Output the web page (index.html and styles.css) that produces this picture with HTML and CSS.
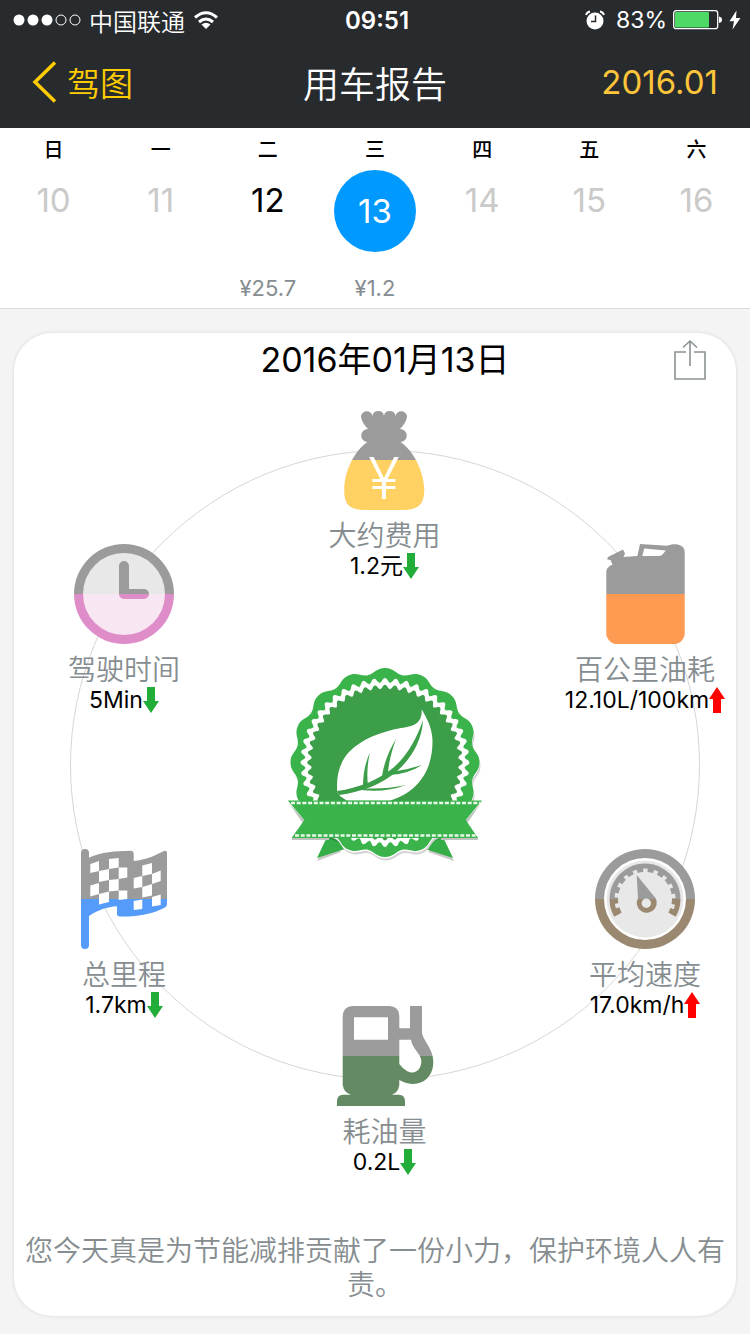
FILE: index.html
```html
<!DOCTYPE html>
<html lang="zh-CN">
<head>
<meta charset="utf-8">
<meta name="viewport" content="width=device-width">
<title>用车报告</title>
<link rel="stylesheet" href="styles.css">
</head>
<body>
<header class="top">
  <div class="status">
    <div class="status-left">
      <svg class="signal" viewBox="0 0 68 12" width="68" height="12" fill="#fff"><circle cx="6" cy="6" r="5.5"/><circle cx="20" cy="6" r="5.5"/><circle cx="34" cy="6" r="5.5"/><g fill="none" stroke="#fff"><circle cx="48" cy="6" r="5"/><circle cx="62" cy="6" r="5"/></g></svg>
      <span>中国联通</span>
      <svg viewBox="0 0 26 20" width="26" height="20" fill="none" stroke="#fff" stroke-width="3"><path d="M2 7.5Q13-2 24 7.5"/><path d="M6 12Q13 6 20 12"/><path d="M8.500 14.500Q13 11 17.500 14.500L13 19Z" fill="#fff" stroke="none"/></svg>
    </div>
    <time class="clock">09:51</time>
    <div class="status-right">
      <svg viewBox="0 0 20 20" width="20" height="20"><circle cx="10" cy="11" r="8.500" fill="#fff"/><path d="M1 5Q2 2 5 1.500M15 1.500Q18 2 19 5" stroke="#fff" stroke-width="1.800" fill="none"/><path d="M10.500 5.500V11.500H6" fill="none" stroke="#272b2e" stroke-width="1.500"/></svg>
      <span class="percent">83%</span>
      <svg viewBox="0 0 50 20" width="50" height="20"><rect x=".7" y=".7" width="44" height="18" rx="2.500" fill="none" stroke="#fff" stroke-width="1.300"/><rect x="2" y="2" width="34" height="15.500" rx="1" fill="#4cd964"/><path d="M46 6.500Q49 7 49 9.700T46 13Z" fill="#fff"/></svg>
      <svg viewBox="0 0 12 20" width="12" height="20" fill="#fff"><path d="M7.500.5L.5 11.300H5L3.500 19.500 11.500 8H7Z"/></svg>
    </div>
  </div>
  <nav class="nav">
    <a class="back" href="#"><svg viewBox="0 0 25 42" width="25" height="42" fill="none" stroke="#fc0" stroke-width="3.500"><path d="M23 1.500L3 21 23 40.500"/></svg>驾图</a>
    <h1 class="nav-title">用车报告</h1>
    <button class="month" type="button">2016.01</button>
  </nav>
</header>

<section class="week">
  <div class="day"><span class="weekday">日</span><button class="date" type="button">10</button></div>
  <div class="day"><span class="weekday">一</span><button class="date" type="button">11</button></div>
  <div class="day"><span class="weekday">二</span><button class="date has-data" type="button">12</button><span class="cost">¥25.7</span></div>
  <div class="day"><span class="weekday">三</span><button class="date selected" type="button">13</button><span class="cost">¥1.2</span></div>
  <div class="day"><span class="weekday">四</span><button class="date" type="button">14</button></div>
  <div class="day"><span class="weekday">五</span><button class="date" type="button">15</button></div>
  <div class="day"><span class="weekday">六</span><button class="date" type="button">16</button></div>
</section>

<svg class="defs" width="0" height="0">
  <defs>
    <linearGradient id="gold" gradientUnits="userSpaceOnUse" x1="0" y1="0" x2="0" y2="100"><stop offset=".5" stop-color="#9b9b9b"/><stop offset=".5" stop-color="#ffd062"/></linearGradient>
    <linearGradient id="pink" gradientUnits="userSpaceOnUse" x1="0" y1="0" x2="0" y2="100"><stop offset=".5" stop-color="#9b9b9b"/><stop offset=".5" stop-color="#df8dc9"/></linearGradient>
    <linearGradient id="face" gradientUnits="userSpaceOnUse" x1="0" y1="0" x2="0" y2="100"><stop offset=".5" stop-color="#e8e8e8"/><stop offset=".5" stop-color="#f8e6f2"/></linearGradient>
    <linearGradient id="orange" gradientUnits="userSpaceOnUse" x1="0" y1="0" x2="0" y2="100"><stop offset=".5" stop-color="#9b9b9b"/><stop offset=".5" stop-color="#ff9a52"/></linearGradient>
    <linearGradient id="blue" gradientUnits="userSpaceOnUse" x1="0" y1="0" x2="0" y2="100"><stop offset=".5" stop-color="#9b9b9b"/><stop offset=".5" stop-color="#549bfa"/></linearGradient>
    <linearGradient id="brown" gradientUnits="userSpaceOnUse" x1="0" y1="0" x2="0" y2="100"><stop offset=".5" stop-color="#9b9b9b"/><stop offset=".5" stop-color="#9b8871"/></linearGradient>
    <linearGradient id="green" gradientUnits="userSpaceOnUse" x1="0" y1="0" x2="0" y2="100"><stop offset=".5" stop-color="#9b9b9b"/><stop offset=".5" stop-color="#638a63"/></linearGradient>
    <symbol id="down" viewBox="0 0 16 26"><path d="M4 0H12V14H16L8 26 0 14H4Z" fill="#22ac38"/></symbol>
    <symbol id="up" viewBox="0 0 16 26"><path d="M4 26H12V12H16L8 0 0 12H4Z" fill="#f00"/></symbol>
  </defs>
</svg>

<main class="report">
  <article class="card">
    <header class="card-head">
      <h2 class="card-title">2016年01月13日</h2>
      <button class="share" type="button" aria-label="分享"><svg viewBox="0 0 34 42" width="34" height="42" fill="none" stroke="#8a9194" stroke-width="1.600"><path d="M13 13H2V40H32V13H21M17 27V2M10 8.500L17 2 24 8.500"/></svg></button>
    </header>

    <div class="ring">
      <div class="side">
        <div class="metric">
          <svg class="icon" viewBox="0 0 100 100"><circle cx="50" cy="50" r="50" fill="url(#pink)"/><circle cx="50" cy="50" r="41" fill="url(#face)"/><path d="M50 22V50H70" fill="none" stroke="url(#pink)" stroke-width="10" stroke-linecap="round" stroke-linejoin="round"/></svg>
          <span class="label">驾驶时间</span>
          <span class="value">5Min<svg class="arrow"><use href="#down"/></svg></span>
        </div>
        <div class="metric">
          <svg class="icon" viewBox="0 0 100 100"><path fill="url(#blue)" d="M7 4a4 4 0 0 1 8 0V8.700C27 3 42 2 56.500 1.700Q59.500 2 59.700 4.500V12C72 11 82 6 90 2Q93 1 93 4V55Q93 57 91 58.500C79 65 63 68 46 67.500Q43 67 43 65V57.300C33 58 24 61 15 67V96a4 4 0 0 1-8 0Z"/><path fill="#fff" d="M16.300 15L25 12V22L16.300 24ZM16.300 36.500L25 34V45L16.300 47.500ZM25 22L35 20V31L25 33ZM25 45L35 42.500V53L25 55.500ZM35 10L44.700 9V18.500L35 20ZM35 31L44.700 30V41.500L35 42.500ZM44.700 18.500H53.300V28.500L44.700 30ZM44.700 41.500H53.300V50L44.700 51ZM59.700 29L68.300 27V38L59.700 39.500ZM59.700 52L68.300 50.500V60L59.700 61ZM68.300 16.500L78 14V25L68.300 27ZM68.300 38L78 35V46.500L68.300 48.500ZM78 25L86.700 21.500V32L78 35ZM78 48L86.700 45.500V56L78 57.500Z"/></svg>
          <span class="label">总里程</span>
          <span class="value">1.7km<svg class="arrow"><use href="#down"/></svg></span>
        </div>
      </div>

      <div class="middle">
        <div class="metric">
          <svg class="icon" viewBox="0 0 100 100"><path fill="url(#gold)" d="M27 7A5.800 5.800 0 0 1 38.500 6A5.800 5.800 0 0 1 50 6A5.800 5.800 0 0 1 61.500 6A5.800 5.800 0 0 1 73 7Q72 13 66 19A6.500 6.500 0 1 1 66.500 32C80 41 90 62 90.300 80C90 94 85 100 68 100H32C15 100 10 94 10.300 80C10 62 20 41 33.500 32A6.500 6.500 0 1 1 34 19Q28 13 27 7Z"/><text class="yen" x="50" y="89" text-anchor="middle">¥</text></svg>
          <span class="label">大约费用</span>
          <span class="value">1.2元<svg class="arrow"><use href="#down"/></svg></span>
        </div>

        <svg class="badge" viewBox="13 13 194 194">
          <defs>
            <path id="lobe" d="M0 0L-17.400-87.300C-10.400-88.700-9-94.500 0-94.500S10.400-88.700 17.400-87.300Z"/>
            <g id="lobes"><use href="#lobe"/><use href="#lobe" transform="rotate(22.500)"/><use href="#lobe" transform="rotate(45)"/><use href="#lobe" transform="rotate(67.500)"/></g>
            <g id="seal"><circle r="87"/><use href="#lobes"/><use href="#lobes" transform="rotate(90)"/><use href="#lobes" transform="rotate(180)"/><use href="#lobes" transform="rotate(270)"/></g>
            <path id="tooth" d="M0 0L-5.230-79.800C-3-80-2.500-84.500 0-84.500S3-80 5.230-79.800Z"/>
            <g id="teeth2"><use href="#tooth"/><use href="#tooth" transform="rotate(7.500)"/></g>
            <g id="teeth4"><use href="#teeth2"/><use href="#teeth2" transform="rotate(15)"/></g>
            <g id="teeth12"><use href="#teeth4"/><use href="#teeth4" transform="rotate(30)"/><use href="#teeth4" transform="rotate(60)"/></g>
            <g id="teeth"><circle r="79"/><use href="#teeth12"/><use href="#teeth12" transform="rotate(90)"/><use href="#teeth12" transform="rotate(180)"/><use href="#teeth12" transform="rotate(270)"/></g>
          </defs>
          <path d="M54 183L42 206 66 197ZM166 183L179 206 153 197Z" fill="#c9c9c9"/>
          <path d="M52 182L42 203 70 194V182ZM168 182L178 203 150 194V182Z" fill="#35ae48"/>
          <path d="M50 182H72V190ZM170 182H148V190Z" fill="#21863a"/>
          <use href="#seal" fill="#d3d3d3" transform="translate(111 111)"/>
          <use href="#seal" fill="#fff" transform="translate(110 109)"/>
          <g transform="translate(110 107.500)"><use href="#seal" fill="#39b34a"/><use href="#teeth" fill="#fff"/><use href="#teeth" fill="#3c9e48" transform="scale(.92)"/></g>
          <path fill="#fff" d="M146.700 54.300C151 62 157 72 157.500 85C158 112 146 136 115 145.700H72L65 141 62.300 137C61 122 64 108 74 97C88 83 106 77 126 73C140 71 147 68 146.700 54.300Z"/>
          <path fill="#3c9e48" d="M62 136C84 133 103 125 118 113C132 101 142 83 148 65C147 87 135 105 121 117C107 129 87 137 64 140Z"/>
          <path fill="#3c9e48" d="M88 132Q88 112 95 97.500Q91 114 93 131ZM107 121Q110 102 121 84Q114 103 113 118ZM116 117Q132 115 147 110Q133 119 115 120ZM86 133Q108 135 131 130Q110 138 86 135Z"/>
          <path d="M17 183L17 185H54V183ZM166 183V185H203V183ZM14 148L31 167 29 170ZM206 148L189 167 191 170Z" fill="#bfc4c0"/>
          <path d="M12.700 145.500H207L190.700 165 203 183H16.700L29.300 165Z" fill="#39b34a"/>
          <path d="M16 148H205M20 180.500H201" stroke="#e9f8eb" stroke-width="2.300" stroke-dasharray="4 1.700"/>
        </svg>

        <div class="metric fuel">
          <svg class="icon" viewBox="0 0 100 100"><path fill="url(#green)" fill-rule="evenodd" d="M17 0H55Q64.300 1 64.300 10V22.300H75V0H87V27.300C89 36 98.300 43 98.300 56C98.300 74 82 84 64.300 74V79Q63 87 57 88.700H64Q70 89 70 95V100H2V95Q2 89 8 88.700H16Q9 87 7.700 79V10Q8 1 17 0ZM19 11.300V33.700H53V11.300ZM64.300 33.700V58C76 73 87 66 86.300 54C85 47 77 42 76 33.700Z"/></svg>
          <span class="label">耗油量</span>
          <span class="value">0.2L<svg class="arrow"><use href="#down"/></svg></span>
        </div>
      </div>

      <div class="side">
        <div class="metric">
          <svg class="icon" viewBox="0 0 100 100"><path fill="url(#orange)" fill-rule="evenodd" d="M11.300 27Q12 23 17.500 20.500L15.500 16 12.500 15.500Q12 13.500 13 13L28 5.500 30 9.500 28.500 13 42.300 12 45 0 72 1.700C78-1 89.700-1 89.700 8V91Q88 98 81 100H20Q13 98 11.300 91ZM49.300 4.500L47.300 12H64Q67 12 70.700 6.500Z"/></svg>
          <span class="label">百公里油耗</span>
          <span class="value">12.10L/100km<svg class="arrow"><use href="#up"/></svg></span>
        </div>
        <div class="metric">
          <svg class="icon" viewBox="0 0 100 100"><circle cx="50" cy="50" r="50" fill="url(#brown)"/><circle cx="50" cy="50" r="41" fill="#fff"/><circle cx="50" cy="50" r="38.500" fill="#e8e8e8"/><g fill="none" stroke="url(#brown)"><path d="M21.400 66.500A33 33 0 1 1 78.600 66.500" stroke-width="5"/><path d="M24.500 64.700A29.500 29.500 0 1 1 75.500 64.700" stroke-width="5" stroke-dasharray="6.300 4.400"/></g><path fill="url(#brown)" fill-rule="evenodd" d="M41.700 26L58 46A10 10 0 1 1 43 49ZM51.300 49.600A4.700 4.700 0 1 0 51.300 59A4.700 4.700 0 0 0 51.300 49.600Z"/></svg>
          <span class="label">平均速度</span>
          <span class="value">17.0km/h<svg class="arrow"><use href="#up"/></svg></span>
        </div>
      </div>
    </div>

    <p class="comment">您今天真是为节能减排贡献了一份小力，保护环境人人有责。</p>
  </article>
</main>
</body>
</html>
```

FILE: styles.css
```css
* { box-sizing: border-box; }
body {
  margin: 0;
  min-height: 100vh;
  background: #f4f4f4;
  color: #000;
  font-family: Inter, "Noto Sans CJK SC", sans-serif;
  font-weight: 400;
}
button {
  padding: 0;
  border: 0;
  background: none;
  color: inherit;
  font: inherit;
  cursor: pointer;
}
svg { display: block; flex: none; }
h1, h2, p { margin: 0; }
.defs { position: absolute; }

.top { background: #272b2e; color: #fff; }
.status {
  display: grid;
  grid-template-columns: 1fr auto 1fr;
  align-items: center;
  height: 40px;
  padding: 0 9px 0 13px;
  font-size: 24px;
  font-weight: 350;
}
.status-left, .status-right { display: flex; align-items: center; gap: 8px; }
.status-right { justify-content: flex-end; gap: 6px; }
.clock { font-size: 24px; font-weight: 600; }
.percent { margin-left: 5px; font-size: 23px; font-weight: 400; }

.nav {
  display: grid;
  grid-template-columns: 1fr auto 1fr;
  align-items: center;
  height: 88px;
  padding: 0 32px 4px;
}
.back {
  display: flex;
  align-items: center;
  gap: 10px;
  color: #fc0;
  font-size: 33px;
  font-weight: 350;
  text-decoration: none;
}
.nav-title { font-size: 36px; font-weight: 350; }
.month { justify-self: end; color: #ffc53a; font-size: 33px; }

.week {
  display: grid;
  grid-template-columns: repeat(7, 1fr);
  height: 181px;
  border-bottom: 1px solid #dcdcdc;
  background: #fff;
}
.day { display: flex; flex-direction: column; align-items: center; }
.weekday { margin: 7px 0 5px; font-size: 20px; line-height: 30px; font-weight: 500; }
.date {
  height: 82px;
  padding-bottom: 22px;
  color: #cacaca;
  font-size: 33px;
  line-height: 60px;
}
.date.has-data { color: #000; }
.date.selected {
  width: 82px;
  padding: 0;
  border-radius: 50%;
  background: #09f;
  color: #fff;
  line-height: 82px;
}
.cost { margin-top: 21px; color: #868d90; font-size: 22px; line-height: 30px; }

.report { padding: 24px 14px 17px; }
.card {
  border-radius: 38px;
  background: #fff;
  box-shadow: 0 0 3px 1px #e2e2e2;
}
.card-head {
  display: grid;
  grid-template-columns: 1fr auto 1fr;
  align-items: center;
  height: 77px;
  padding: 0 29px 24px 49px;
}
.card-title { grid-column: 2; font-size: 34px; line-height: 48px; font-weight: 400; }
.share { justify-self: end; }

.ring {
  position: relative;
  display: flex;
  justify-content: space-between;
  padding: 0 1px 0 20px;
}
.ring::before {
  content: "";
  position: absolute;
  top: 40px;
  left: 56px;
  right: 36px;
  aspect-ratio: 1;
  border: 1px solid #d6d6d6;
  border-radius: 50%;
}
.side, .middle {
  position: relative;
  display: flex;
  flex-direction: column;
  align-items: center;
  width: 180px;
}
.side { gap: 135px; padding-top: 134px; }
.metric {
  display: flex;
  flex-direction: column;
  align-items: center;
  white-space: nowrap;
}
.icon { width: 100px; height: 100px; margin-bottom: 10px; overflow: visible; }
.yen { fill: #fff; font-size: 58px; font-weight: 300; }
.label { color: #868d90; font-size: 28px; line-height: 32px; font-weight: 350; }
.value {
  display: flex;
  align-items: center;
  font-size: 23px;
  line-height: 28px;
}
.arrow { width: 16px; height: 26px; }
.badge { width: 194px; height: 194px; margin-top: 88px; }
.fuel { margin-top: 144px; }

.comment {
  padding: 58px 10px 14px;
  color: #868d90;
  font-size: 28px;
  line-height: 34px;
  font-weight: 350;
  text-align: center;
}
```
